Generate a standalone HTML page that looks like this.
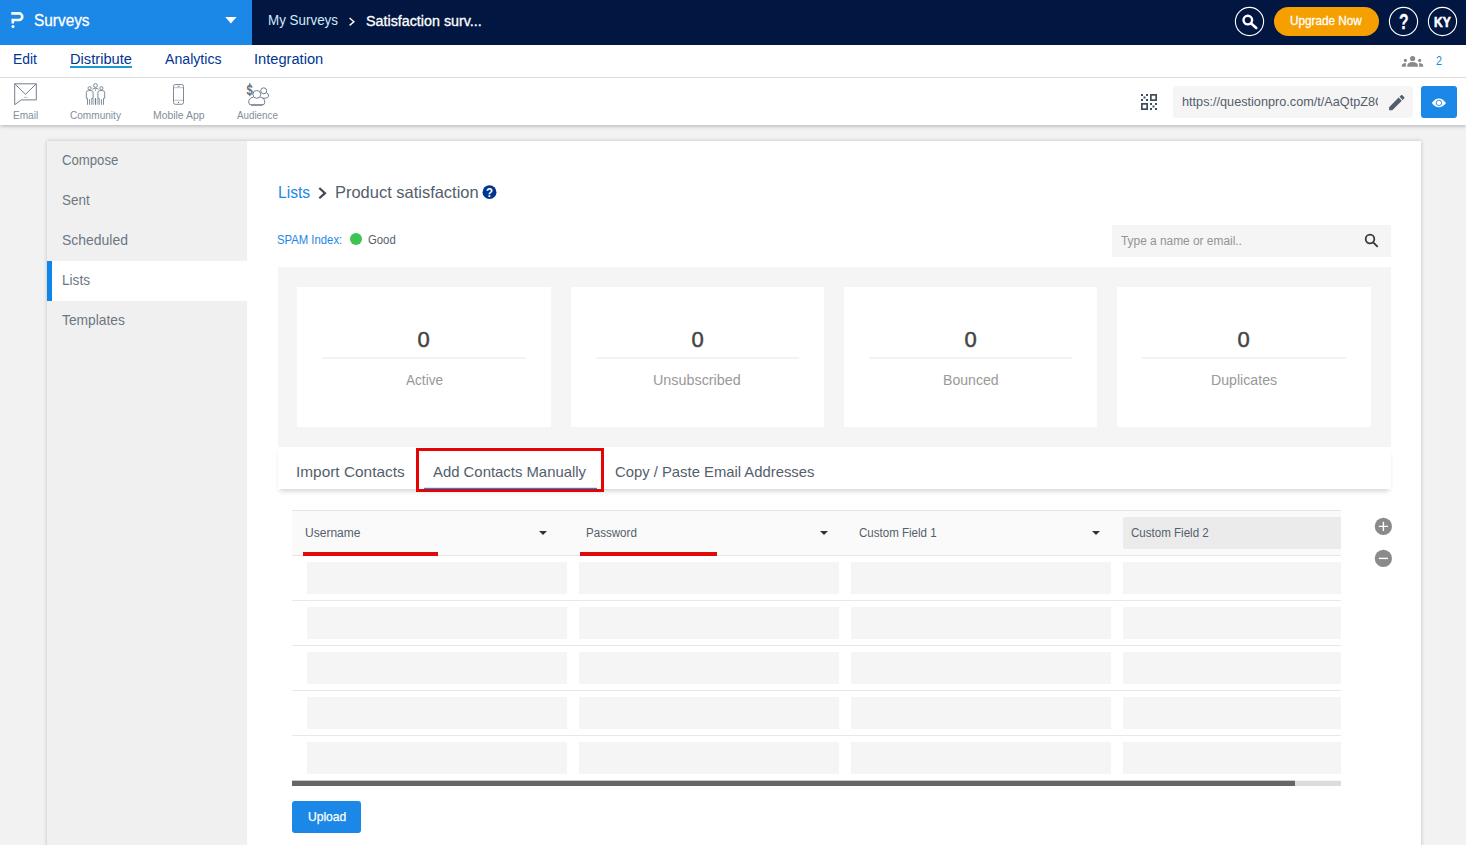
<!DOCTYPE html>
<html lang="en">
<head>
<meta charset="utf-8">
<title>Lists - Product satisfaction</title>
<style>
*{box-sizing:border-box;margin:0;padding:0}
html,body{width:1466px;height:845px;overflow:hidden}
body{background:#f2f2f2;font-family:"Liberation Sans",sans-serif;color:#545e6b;position:relative}
.abs{position:absolute}
.t{position:absolute;white-space:nowrap;line-height:1}
svg{position:absolute;overflow:visible}
#top{left:0;top:0;width:1466px;height:45px;background:#011640}
#brand{left:0;top:0;width:252px;height:45px;background:#1b87e6}
#nav{left:0;top:45px;width:1466px;height:33px;background:#fff;border-bottom:1px solid #dedede}
#tool{left:0;top:78px;width:1466px;height:47px;background:#fff;box-shadow:0 1px 4px rgba(0,0,0,.28);clip-path:inset(0 0 -12px 0)}
#card{left:47px;top:141px;width:1374px;height:720px;background:#fff;box-shadow:0 0 4px rgba(0,0,0,.22)}
#side{left:47px;top:141px;width:200px;height:704px;background:#f0f0f0}
#active{left:47px;top:261px;width:200px;height:40px;background:#fff;border-left:5px solid #1085e8}
#pill{left:1274px;top:7px;width:105px;height:29px;background:#f5a000;border-radius:15px}
#urlbox{left:1173px;top:86px;width:240px;height:32px;background:#f5f5f5;border-radius:3px}
#eye{left:1421px;top:86px;width:36px;height:32px;background:#1b87e6;border-radius:3px}
#srch{left:1112px;top:225px;width:279px;height:32px;background:#f5f5f5}
#stats{left:278px;top:267px;width:1113px;height:180px;background:#f5f5f5}
.sc{top:287px;width:254px;height:140px;background:#fff}
.sl{top:357px;height:2px;width:204px;background:#f3f3f3}
#tabs{left:278px;top:447px;width:1113px;height:42px;background:#fff;box-shadow:0 4px 5px -2px rgba(0,0,0,.19)}
#thead{left:292px;top:510px;width:1049px;height:46px;background:#fafafa;border-top:1px solid #e6e6e6;border-bottom:1px solid #e6e6e6}
.red{top:552px;height:4px;background:#e00a0a}
.arr{top:531px;width:0;height:0;border-left:4px solid transparent;border-right:4px solid transparent;border-top:4px solid #333}
.rb{left:292px;width:1049px;height:1px;background:#e8e8e8}
.inp{height:32px;background:#f5f5f5}
#cf2{left:1123px;top:517px;width:218px;height:32px;background:#ebebeb;border-radius:3px 0 0 3px}
#upl{left:292px;top:801px;width:69px;height:32px;background:#1b87e6;border-radius:3px}
#dot{left:350px;top:233px;width:12px;height:12px;border-radius:50%;background:#3ec455}
#dul{left:70px;top:66px;width:62px;height:2px;background:#1b9ad6}
#urlmask{left:1378px;top:90px;width:10px;height:24px;background:#f5f5f5}

</style>
</head>
<body>
<div class="abs" id="top"></div>
<div class="abs" id="brand"></div>
<div class="abs" id="nav"></div>
<div class="abs" id="tool"></div>
<div class="abs" id="card"></div>
<div class="abs" id="side"></div>
<div class="abs" id="active"></div>
<div class="abs" id="pill"></div>
<div class="abs" id="dul"></div>
<div class="abs" id="urlbox"></div>
<div class="abs" id="eye"></div>
<div class="abs" id="dot"></div>
<div class="abs" id="srch"></div>
<div class="abs" id="stats"></div>
<div class="abs sc" style="left:297px"></div>
<div class="abs sl" style="left:322px"></div>
<div class="abs sc" style="left:571px;width:253px"></div>
<div class="abs sl" style="left:596px;width:203px"></div>
<div class="abs sc" style="left:844px;width:253px"></div>
<div class="abs sl" style="left:869px;width:203px"></div>
<div class="abs sc" style="left:1117px"></div>
<div class="abs sl" style="left:1142px"></div>
<div class="abs" id="tabs"></div>
<div class="abs" id="thead"></div><div class="abs" id="cf2"></div>
<div class="abs arr" style="left:539px"></div>
<div class="abs arr" style="left:820px"></div>
<div class="abs arr" style="left:1092px"></div>
<div class="abs red" style="left:303px;width:135px"></div>
<div class="abs red" style="left:580px;width:137px"></div>
<div class="abs rb" style="top:600px"></div>
<div class="abs inp" style="left:307px;top:562px;width:260px"></div>
<div class="abs inp" style="left:579px;top:562px;width:260px"></div>
<div class="abs inp" style="left:851px;top:562px;width:260px"></div>
<div class="abs inp" style="left:1123px;top:562px;width:218px"></div>
<div class="abs rb" style="top:645px"></div>
<div class="abs inp" style="left:307px;top:607px;width:260px"></div>
<div class="abs inp" style="left:579px;top:607px;width:260px"></div>
<div class="abs inp" style="left:851px;top:607px;width:260px"></div>
<div class="abs inp" style="left:1123px;top:607px;width:218px"></div>
<div class="abs rb" style="top:690px"></div>
<div class="abs inp" style="left:307px;top:652px;width:260px"></div>
<div class="abs inp" style="left:579px;top:652px;width:260px"></div>
<div class="abs inp" style="left:851px;top:652px;width:260px"></div>
<div class="abs inp" style="left:1123px;top:652px;width:218px"></div>
<div class="abs rb" style="top:735px"></div>
<div class="abs inp" style="left:307px;top:697px;width:260px"></div>
<div class="abs inp" style="left:579px;top:697px;width:260px"></div>
<div class="abs inp" style="left:851px;top:697px;width:260px"></div>
<div class="abs inp" style="left:1123px;top:697px;width:218px"></div>
<div class="abs inp" style="left:307px;top:742px;width:260px"></div>
<div class="abs inp" style="left:579px;top:742px;width:260px"></div>
<div class="abs inp" style="left:851px;top:742px;width:260px"></div>
<div class="abs inp" style="left:1123px;top:742px;width:218px"></div>
<div class="abs" id="upl"></div>
<svg width="1466" height="845" viewBox="0 0 1466 845" style="left:0;top:0">
<path d="M225.2 16.9H236.6L230.9 23.6Z" fill="#fff"/>
<!-- logo -->
<path d="M11.3 13.4H19A3.3 3.3 0 0 1 19 20H12.8V23.4" fill="none" stroke="#fff" stroke-width="2.6"/>
<circle cx="13" cy="26.6" r="1.5" fill="#fff"/>
<!-- top search -->
<circle cx="1247.8" cy="20.1" r="4.3" fill="none" stroke="#fff" stroke-width="2.4"/>
<path d="M1251.2 23.5L1256.3 27.9" stroke="#fff" stroke-width="2.6" stroke-linecap="round"/>
<!-- people -->
<g fill="#8a8a8a">
<circle cx="1412.6" cy="58.5" r="2.6"/>
<path d="M1407.3 66.8V65.4C1407.3 63.2 1409.6 61.9 1412.6 61.9S1417.9 63.2 1417.9 65.4V66.8Z"/>
<circle cx="1405.4" cy="60.4" r="1.6"/>
<circle cx="1419.7" cy="60.4" r="1.6"/>
<path d="M1401.8 66.8V65.6C1401.8 64 1403.6 63 1405.9 63C1405.9 63.6 1405.9 66.8 1405.9 66.8Z"/>
<path d="M1423.2 66.8V65.6C1423.2 64 1421.4 63 1419.1 63C1419.1 63.6 1419.1 66.8 1419.1 66.8Z"/>
</g>
<!-- email -->
<g fill="none" stroke="#737f8e" stroke-width="1" stroke-linejoin="round">
<path d="M14.7 83.8H36.3V99.9H21.2L14.7 104.7Z"/>
<path d="M14.7 83.8L25.5 94.3L36.3 83.8"/>
<path d="M24 97.4H27.4" opacity=".5"/>
</g>
<!-- community -->
<g fill="none" stroke="#737f8e" stroke-width=".9">
<circle cx="95.5" cy="85.5" r="1.9"/>
<circle cx="89.6" cy="88.2" r="1.6"/>
<circle cx="101.4" cy="88.2" r="1.6"/>
<path d="M92.4 89.2Q95.5 87 98.6 89.2"/>
<path d="M95.5 88.4V91" opacity=".6"/>
<path d="M87.5 98.3H86.3V92.6Q86.3 90.6 88.3 90.6H91.1Q93.1 90.6 93.1 92.6V98.3H91.8"/>
<path d="M87.5 98.3V104.8M89.6 99.2V104.8M91.8 98.3V104.8"/>
<path d="M103.5 98.3H104.7V92.6Q104.7 90.6 102.7 90.6H99.9Q97.9 90.6 97.9 92.6V98.3H99.2"/>
<path d="M103.5 98.3V104.8M101.4 99.2V104.8M99.2 98.3V104.8"/>
<path d="M95.5 98V104.8" stroke-width="1.1"/>
<path d="M93.4 98.4V104.8M97.6 98.4V104.8" stroke-width="1.6" opacity=".45"/>
</g>
<!-- mobile -->
<g fill="none" stroke="#737f8e">
<rect x="173.5" y="84.5" width="10" height="19.8" rx="1.8" stroke-width=".9"/>
<path d="M173.5 87.7H183.5M173.5 100.3H183.5" stroke-width=".7" opacity=".7"/>
<path d="M177.3 86.3H179.8" stroke-width=".8"/>
<circle cx="178.5" cy="102.4" r=".55" fill="#5a6675" stroke="none"/>
</g>
<!-- audience -->
<g fill="none" stroke="#737f8e" stroke-width="1">
<circle cx="263.7" cy="90.8" r="3"/>
<path d="M266.3 92.6Q268.8 93.4 268.6 96.2Q268.4 98 265.4 98.2H262.5"/>
<ellipse cx="256.8" cy="94.4" rx="3.9" ry="3.9" fill="#fff"/>
<path d="M253.2 97.2Q248.7 98 248.7 102.2Q248.7 105 251.5 105H262Q264.8 105 264.8 102.2Q264.8 98 260.4 97.2"/>
<path d="M251 105H262.4" stroke-width="1.3"/>
</g>
<text transform="translate(246.5 94.5) scale(.76 1)" font-family="Liberation Sans, sans-serif" font-weight="bold" font-size="15" fill="#66727f">$</text>
<path d="M249.75 83.3V85M249.75 93.8V95.7" stroke="#66727f" stroke-width="1.3"/>
<!-- qr -->
<g fill="#3f4d5c">
<rect x="1141" y="94" width="2" height="2"/><rect x="1146" y="94" width="2" height="2"/><rect x="1143.5" y="96.5" width="2" height="2"/><rect x="1141" y="99" width="2" height="2"/><rect x="1146" y="99" width="2" height="2"/>
<rect x="1150" y="103" width="2" height="2"/><rect x="1155" y="103" width="2" height="2"/><rect x="1152.5" y="105.5" width="2" height="2"/><rect x="1150" y="108" width="2" height="2"/><rect x="1155" y="108" width="2" height="2"/>
</g>
<g fill="none" stroke="#3f4d5c" stroke-width="1.7">
<rect x="1150.85" y="94.85" width="5.3" height="5.3"/><rect x="1141.85" y="103.85" width="5.3" height="5.3"/>
</g>
<!-- pencil -->
<g transform="translate(1386.5 92.3) scale(.86)" fill="#545e6b">
<path d="M3 17.25V21h3.75L17.81 9.94l-3.75-3.75L3 17.25zM20.71 7.04c.39-.39.39-1.02 0-1.41l-2.34-2.34c-.39-.39-1.02-.39-1.41 0l-1.83 1.83 3.75 3.75 1.83-1.83z"/>
</g>
<!-- eye -->
<path d="M1431.8 102.9Q1435.2 98.6 1438.9 98.6Q1442.6 98.6 1446 102.9Q1442.6 107.2 1438.9 107.2Q1435.2 107.2 1431.8 102.9Z" fill="#fff"/>
<circle cx="1438.9" cy="102.9" r="2.7" fill="#fff" stroke="#1b87e6" stroke-width=".9"/>
<circle cx="489.5" cy="192.15" r="6.95" fill="#003594"/>
<!-- search in box -->
<circle cx="1370" cy="239" r="4.3" fill="none" stroke="#3a3a3a" stroke-width="1.8"/>
<path d="M1373.2 242.3L1377.7 246.8" stroke="#3a3a3a" stroke-width="1.9"/>
<!-- heading chevron -->
<path d="M319.3 188L325 193.15L319.3 198.3" fill="none" stroke="#434850" stroke-width="2.2"/>
<!-- top chevron -->
<path d="M349.6 18L353.9 21.7L349.6 25.4" fill="none" stroke="#fff" stroke-width="1.4"/>
<!-- plus/minus -->
<circle cx="1383.4" cy="526.4" r="8.6" fill="#8a8a8a"/>
<path d="M1378.8 526.4H1388M1383.4 521.8V531" stroke="#fff" stroke-width="1.4"/>
<circle cx="1383.4" cy="558.4" r="8.6" fill="#8a8a8a"/>
<path d="M1378.8 558.4H1388" stroke="#fff" stroke-width="1.4"/>
<!-- circles -->
<g fill="none" stroke="#fff" stroke-width="1.1"><circle cx="1249.5" cy="21.5" r="14.1"/><circle cx="1403.5" cy="21.5" r="14.1"/><circle cx="1442.5" cy="21.5" r="14.1"/></g>
<rect x="424" y="487.8" width="173" height="2" fill="#1b87e6"/>
<!-- highlight -->
<rect x="417.5" y="449.5" width="185" height="41" fill="none" stroke="#e50303" stroke-width="3"/>
<!-- scrollbar -->
<rect x="292" y="780.7" width="1049" height="5.3" fill="#dcdcdc"/><rect x="292" y="780.7" width="1003" height="5.3" fill="#666"/>
</svg>

<div class="t" id="t_surveys" style="left:33.83px;top:12.5px;font-size:16px;color:#fff;transform:scaleX(0.9614);transform-origin:0 0;-webkit-text-stroke:.3px #fff;">Surveys</div>
<div class="t" id="t_mys" style="left:268.12px;top:13.1px;font-size:14px;color:#d2e9fb;transform:scaleX(0.9574);transform-origin:0 0;">My Surveys</div>
<div class="t" id="t_sat" style="left:366.49px;top:14.1px;font-size:14px;color:#fff;transform:scaleX(1.0212);transform-origin:0 0;-webkit-text-stroke:.3px #fff;">Satisfaction surv...</div>
<div class="t" id="t_upg" style="left:1289.60px;top:15.1px;font-size:12.5px;color:#fff;transform:scaleX(0.9393);transform-origin:0 0;-webkit-text-stroke:.3px #fff;">Upgrade Now</div>
<div class="t" id="t_ky" style="left:1434.40px;top:15.2px;font-size:14px;color:#fff;transform:scaleX(0.8600);transform-origin:0 0;font-weight:bold;-webkit-text-stroke:.6px #fff;">KY</div>
<div class="t" id="t_q" style="left:1398.50px;top:11.6px;font-size:21.5px;color:#fff;font-weight:bold;-webkit-text-stroke:.3px #fff;transform:scaleX(.73);transform-origin:0 0;">?</div>
<div class="t" id="h3" style="left:486.20px;top:186.2px;font-size:13px;color:#fff;font-weight:bold;transform:scaleX(.88);transform-origin:0 0;">?</div>
<div class="t" id="n1" style="left:13.10px;top:51.5px;font-size:14px;color:#003594;transform:scaleX(0.9883);transform-origin:0 0;">Edit</div>
<div class="t" id="n2" style="left:70.25px;top:51.5px;font-size:14px;color:#003594;transform:scaleX(1.0490);transform-origin:0 0;">Distribute</div>
<div class="t" id="n3" style="left:164.80px;top:51.5px;font-size:14px;color:#003594;transform:scaleX(1.0093);transform-origin:0 0;">Analytics</div>
<div class="t" id="n4" style="left:254.09px;top:51.5px;font-size:14px;color:#003594;transform:scaleX(1.0460);transform-origin:0 0;">Integration</div>
<div class="t" id="t_two" style="left:1435.60px;top:55.1px;font-size:12.5px;color:#1b87e6;transform:scaleX(.86);transform-origin:0 0;">2</div>
<div class="t" id="o1" style="left:12.86px;top:109.9px;font-size:10.5px;color:#838e9c;transform:scaleX(0.9593);transform-origin:0 0;">Email</div>
<div class="t" id="o2" style="left:70.22px;top:109.9px;font-size:10.5px;color:#838e9c;transform:scaleX(0.9592);transform-origin:0 0;">Community</div>
<div class="t" id="o3" style="left:152.78px;top:109.9px;font-size:10.5px;color:#838e9c;transform:scaleX(0.9909);transform-origin:0 0;">Mobile App</div>
<div class="t" id="o4" style="left:236.89px;top:109.9px;font-size:10.5px;color:#838e9c;transform:scaleX(0.9327);transform-origin:0 0;">Audience</div>
<div class="t" id="t_url" style="left:1181.95px;top:95px;font-size:13px;color:#545e6b;transform:scaleX(.975);transform-origin:0 0;">https://questionpro.com/t/AaQtpZ8Q</div>
<div class="t" id="s1" style="left:62.00px;top:152.8px;font-size:14.5px;color:#6d7782;transform:scaleX(0.9076);transform-origin:0 0;">Compose</div>
<div class="t" id="s2" style="left:62.00px;top:192.6px;font-size:14.5px;color:#6d7782;transform:scaleX(0.9287);transform-origin:0 0;">Sent</div>
<div class="t" id="s3" style="left:62.00px;top:232.8px;font-size:14.5px;color:#6d7782;transform:scaleX(0.9623);transform-origin:0 0;">Scheduled</div>
<div class="t" id="s4" style="left:62.00px;top:272.7px;font-size:14.5px;color:#6d7782;transform:scaleX(0.9391);transform-origin:0 0;">Lists</div>
<div class="t" id="s5" style="left:62.00px;top:312.8px;font-size:14.5px;color:#6d7782;transform:scaleX(0.9528);transform-origin:0 0;">Templates</div>
<div class="t" id="h1" style="left:278.40px;top:183.8px;font-size:16.5px;color:#1b87e6;transform:scaleX(0.9479);transform-origin:0 0;">Lists</div>
<div class="t" id="h2" style="left:334.84px;top:183.8px;font-size:16.5px;color:#545e6b;transform:scaleX(0.9976);transform-origin:0 0;">Product satisfaction</div>
<div class="t" id="sp1" style="left:277.12px;top:233.5px;font-size:12px;color:#1b87e6;transform:scaleX(0.9429);transform-origin:0 0;">SPAM Index:</div>
<div class="t" id="sp2" style="left:367.60px;top:233.5px;font-size:12px;color:#545e6b;transform:scaleX(0.9424);transform-origin:0 0;">Good</div>
<div class="t" id="ph" style="left:1120.89px;top:235.3px;font-size:12px;color:#939393;transform:scaleX(0.9903);transform-origin:0 0;">Type a name or email..</div>
<div class="t" id="num0" style="left:417.38px;top:328.8px;font-size:22px;color:#444;-webkit-text-stroke:.5px #444;">0</div>
<div class="t" id="lab0" style="left:406.02px;top:373.1px;font-size:14px;color:#999;transform:scaleX(0.9713);transform-origin:0 0;">Active</div>
<div class="t" id="num1" style="left:691.38px;top:328.8px;font-size:22px;color:#444;-webkit-text-stroke:.5px #444;">0</div>
<div class="t" id="lab1" style="left:652.73px;top:373.1px;font-size:14px;color:#999;transform:scaleX(1.0248);transform-origin:0 0;">Unsubscribed</div>
<div class="t" id="num2" style="left:964.38px;top:328.8px;font-size:22px;color:#444;-webkit-text-stroke:.5px #444;">0</div>
<div class="t" id="lab2" style="left:942.61px;top:373.1px;font-size:14px;color:#999;transform:scaleX(1.0067);transform-origin:0 0;">Bounced</div>
<div class="t" id="num3" style="left:1237.38px;top:328.8px;font-size:22px;color:#444;-webkit-text-stroke:.5px #444;">0</div>
<div class="t" id="lab3" style="left:1211.41px;top:373.1px;font-size:14px;color:#999;transform:scaleX(1.0108);transform-origin:0 0;">Duplicates</div>
<div class="t" id="tb1" style="left:296.24px;top:464.1px;font-size:15px;color:#545e6b;transform:scaleX(1.0265);transform-origin:0 0;">Import Contacts</div>
<div class="t" id="tb2" style="left:432.87px;top:464.1px;font-size:15px;color:#545e6b;transform:scaleX(0.9920);transform-origin:0 0;">Add Contacts Manually</div>
<div class="t" id="tb3" style="left:614.83px;top:464.1px;font-size:15px;color:#545e6b;transform:scaleX(0.9884);transform-origin:0 0;">Copy / Paste Email Addresses</div>
<div class="t" id="th1" style="left:305.17px;top:526.5px;font-size:12.5px;color:#545e6b;transform:scaleX(0.9630);transform-origin:0 0;">Username</div>
<div class="t" id="th2" style="left:585.77px;top:526.5px;font-size:12.5px;color:#545e6b;transform:scaleX(0.9265);transform-origin:0 0;">Password</div>
<div class="t" id="th3" style="left:858.97px;top:526.5px;font-size:12.5px;color:#545e6b;transform:scaleX(0.9235);transform-origin:0 0;">Custom Field 1</div>
<div class="t" id="th4" style="left:1130.85px;top:526.5px;font-size:12.5px;color:#545e6b;transform:scaleX(0.9247);transform-origin:0 0;">Custom Field 2</div>
<div class="t" id="t_upl" style="left:308.05px;top:810px;font-size:13px;color:#fff;transform:scaleX(0.9286);transform-origin:0 0;-webkit-text-stroke:.25px #fff;">Upload</div>
<div class="abs" id="urlmask"></div>
</body>
</html>
